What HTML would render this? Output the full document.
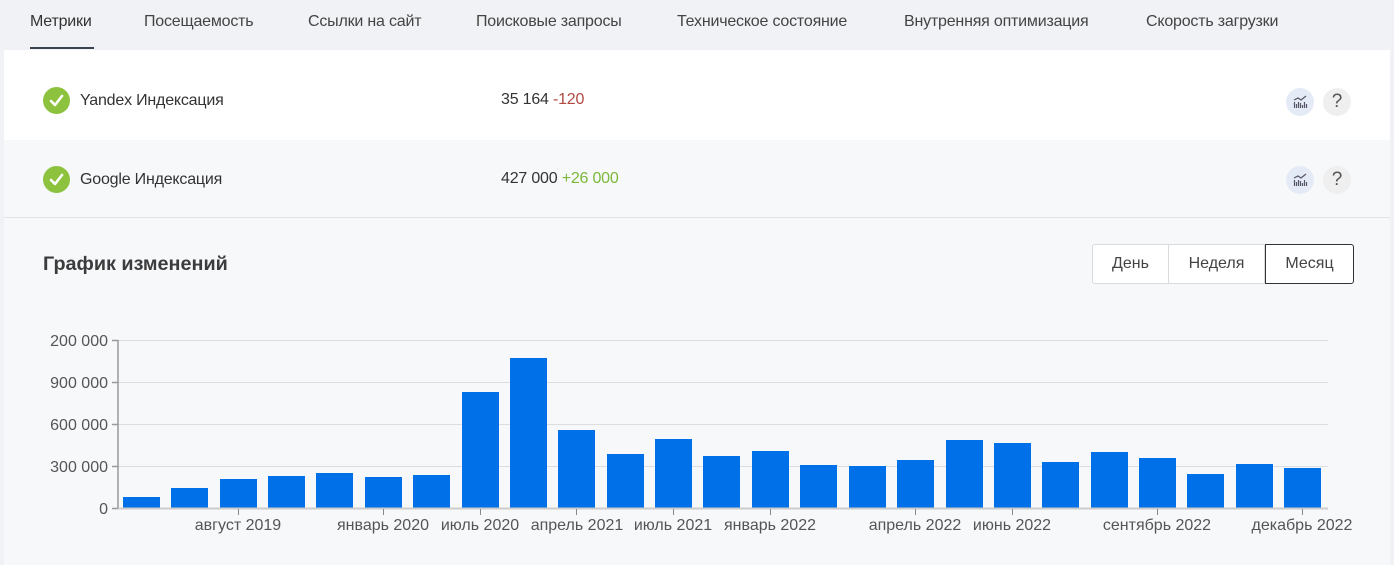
<!DOCTYPE html>
<html><head><meta charset="utf-8"><style>
*{margin:0;padding:0;box-sizing:border-box}
body{width:1394px;height:565px;background:#f0f2f5;font-family:"Liberation Sans",Arial,sans-serif;position:relative;overflow:hidden;color:#333}
.tab{position:absolute;top:13px;font-size:16px;color:#444;white-space:nowrap;letter-spacing:-0.2px}
.ul{position:absolute;left:30px;top:47px;width:64px;height:2px;background:#3a4350}
.panel{position:absolute;left:4px;top:50px;width:1386px;height:515px;background:#f7f8fa}
.row1{position:absolute;left:4px;top:50px;width:1386px;height:90px;background:#fff}
.row2{position:absolute;left:4px;top:140px;width:1386px;height:78px;background:#f7f8fa;border-bottom:1px solid #e2e4e8;border-radius:8px 8px 0 0}
.chk{position:absolute;width:27px;height:27px;border-radius:50%;background:#8dc23f}
.lbl{position:absolute;font-size:16px;color:#333;white-space:nowrap;letter-spacing:-0.2px}
.ic{position:absolute;width:28px;height:28px;border-radius:50%}
.q{background:#efefef;color:#555;font-size:19px;text-align:center;line-height:28px}
.g{background:#e4ebf7}
.btns{position:absolute;left:1092px;top:244px;height:40px;display:flex}
.btns div{border:1px solid #d8dadd;background:#fff;font-size:16px;color:#444;line-height:38px;text-align:center}
</style></head><body>
<div class="tab" style="left:30px;color:#333">Метрики</div>
<div class="tab" style="left:144px">Посещаемость</div>
<div class="tab" style="left:308px">Ссылки на сайт</div>
<div class="tab" style="left:476px">Поисковые запросы</div>
<div class="tab" style="left:677px">Техническое состояние</div>
<div class="tab" style="left:904px">Внутренняя оптимизация</div>
<div class="tab" style="left:1146px">Скорость загрузки</div>
<div class="ul"></div>
<div class="panel"></div>
<div class="row1"></div>
<div class="row2"></div>

<svg class="chk" style="left:43px;top:87px" viewBox="0 0 27 27"><path d="M8 14l4 4 7-9" stroke="#fff" stroke-width="2.6" fill="none" stroke-linecap="round" stroke-linejoin="round"/></svg>
<div class="lbl" style="left:80px;top:92px">Yandex Индексация</div>
<div class="lbl" style="left:501px;top:91px">35 164 <span style="color:#b04a40">-120</span></div>
<svg class="ic g" style="left:1286px;top:88px" viewBox="0 0 28 28"><path d="M8 12l4-2 3 2 5-4" stroke="#556" stroke-width="1.2" fill="none"/><path d="M8.5 14v6M10.5 16v4M12.5 14v6M14.5 15v5M16.5 17v3M18.5 14v6M20.5 16v4" stroke="#556" stroke-width="1.2"/></svg>
<div class="ic q" style="left:1323px;top:88px">?</div>

<svg class="chk" style="left:43px;top:166px" viewBox="0 0 27 27"><path d="M8 14l4 4 7-9" stroke="#fff" stroke-width="2.6" fill="none" stroke-linecap="round" stroke-linejoin="round"/></svg>
<div class="lbl" style="left:80px;top:171px">Google Индексация</div>
<div class="lbl" style="left:501px;top:170px">427 000 <span style="color:#7cb83a">+26 000</span></div>
<svg class="ic g" style="left:1286px;top:166px" viewBox="0 0 28 28"><path d="M8 12l4-2 3 2 5-4" stroke="#556" stroke-width="1.2" fill="none"/><path d="M8.5 14v6M10.5 16v4M12.5 14v6M14.5 15v5M16.5 17v3M18.5 14v6M20.5 16v4" stroke="#556" stroke-width="1.2"/></svg>
<div class="ic q" style="left:1323px;top:166px">?</div>

<div style="position:absolute;left:43px;top:253px;font-size:19.8px;font-weight:bold;color:#3c3c3c">График изменений</div>
<div class="btns"><div style="width:77px;border-radius:3px 0 0 3px">День</div><div style="width:96px;border-left:none">Неделя</div><div style="width:89px;border:1px solid #333;border-radius:0 3px 3px 0">Месяц</div></div>

<svg style="position:absolute;left:0;top:0" width="1394" height="565" font-family="Liberation Sans,Arial,sans-serif" font-size="16" fill="#555">
<g stroke="#dcdde0" stroke-width="1"><line x1="118" y1="340.5" x2="1328" y2="340.5"/><line x1="118" y1="382.5" x2="1328" y2="382.5"/><line x1="118" y1="424.5" x2="1328" y2="424.5"/><line x1="118" y1="466.5" x2="1328" y2="466.5"/></g>
<g fill="#0070e8">
<rect x="123" y="497" width="37" height="11"/><rect x="171" y="488" width="37" height="20"/><rect x="220" y="479" width="37" height="29"/><rect x="268" y="476" width="37" height="32"/><rect x="316" y="473" width="37" height="35"/><rect x="365" y="477" width="37" height="31"/><rect x="413" y="475" width="37" height="33"/><rect x="462" y="392" width="37" height="116"/><rect x="510" y="358" width="37" height="150"/><rect x="558" y="430" width="37" height="78"/><rect x="607" y="454" width="37" height="54"/><rect x="655" y="439" width="37" height="69"/><rect x="703" y="456" width="37" height="52"/><rect x="752" y="451" width="37" height="57"/><rect x="800" y="465" width="37" height="43"/><rect x="849" y="466" width="37" height="42"/><rect x="897" y="460" width="37" height="48"/><rect x="946" y="440" width="37" height="68"/><rect x="994" y="443" width="37" height="65"/><rect x="1042" y="462" width="37" height="46"/><rect x="1091" y="452" width="37" height="56"/><rect x="1139" y="458" width="37" height="50"/><rect x="1187" y="474" width="37" height="34"/><rect x="1236" y="464" width="37" height="44"/><rect x="1284" y="468" width="37" height="40"/>
</g>
<g stroke="#999" stroke-width="1.5"><line x1="118" y1="340" x2="118" y2="509"/><line x1="118" y1="508.5" x2="1328" y2="508.5" stroke="#ccc" stroke-width="2"/>
<line x1="112" y1="340.5" x2="118" y2="340.5"/><line x1="112" y1="382.5" x2="118" y2="382.5"/><line x1="112" y1="424.5" x2="118" y2="424.5"/><line x1="112" y1="466.5" x2="118" y2="466.5"/><line x1="112" y1="508.5" x2="118" y2="508.5"/>
<g stroke="#888" stroke-width="1"><line x1="238.5" y1="509" x2="238.5" y2="515"/><line x1="383.5" y1="509" x2="383.5" y2="515"/><line x1="480.5" y1="509" x2="480.5" y2="515"/><line x1="576.5" y1="509" x2="576.5" y2="515"/><line x1="673.5" y1="509" x2="673.5" y2="515"/><line x1="770.5" y1="509" x2="770.5" y2="515"/><line x1="915.5" y1="509" x2="915.5" y2="515"/><line x1="1012.5" y1="509" x2="1012.5" y2="515"/><line x1="1157.5" y1="509" x2="1157.5" y2="515"/><line x1="1302.5" y1="509" x2="1302.5" y2="515"/></g></g>
<g text-anchor="end"><text x="108" y="346">200 000</text><text x="108" y="388">900 000</text><text x="108" y="430">600 000</text><text x="108" y="472">300 000</text><text x="108" y="514">0</text></g>
<g text-anchor="middle"><text x="238" y="530">август 2019</text><text x="383" y="530">январь 2020</text><text x="480" y="530">июль 2020</text><text x="577" y="530">апрель 2021</text><text x="673" y="530">июль 2021</text><text x="770" y="530">январь 2022</text><text x="915" y="530">апрель 2022</text><text x="1012" y="530">июнь 2022</text><text x="1157" y="530">сентябрь 2022</text><text x="1302" y="530">декабрь 2022</text></g>
</svg>
</body></html>
